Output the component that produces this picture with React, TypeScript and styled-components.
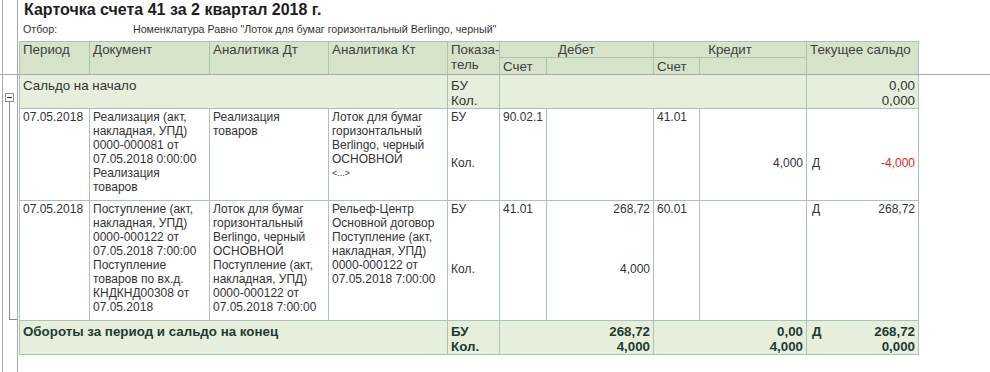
import React from 'react'
import styled, { createGlobalStyle, css } from 'styled-components'

const COLS = '70px 120px 119px 119px 52px 47px 107px 46px 107px 112px'
const GRID_LINE = '#a9c3b7'
const HEAD_BG = '#d6e3ca'
const SOFT_BG = '#e5efdc'
const SHEET_LINE = '#a8a8a8'

const GlobalStyle = createGlobalStyle`
  html, body {
    margin: 0;
    padding: 0;
    background: #fff;
  }
  body {
    font-family: 'Liberation Sans', Arial, sans-serif;
    color: #333;
  }
`

const Sheet = styled.div`
  display: flex;
  flex-direction: column;
  width: 990px;
  min-height: 372px;
  overflow: hidden;
`

const Line = styled.div<{ $rule?: boolean }>`
  display: flex;
  ${({ $rule }) =>
    $rule &&
    css`
      border-bottom: 1px solid ${SHEET_LINE};
    `}
`

const Filler = styled(Line)`
  flex: 1;
`

const Gutter = styled.div`
  flex: 0 0 16px;
  margin-left: 2px;
  box-sizing: border-box;
  border-left: 1px solid ${SHEET_LINE};
  border-right: 1px solid ${SHEET_LINE};
  display: flex;
  flex-direction: column;
`

const Toggle = styled.div`
  margin: auto 0 0 2px;
  width: 9px;
  height: 9px;
  box-sizing: border-box;
  border: 1px solid #8a8a8a;
  display: flex;
  align-items: center;
  justify-content: center;
  &::after {
    content: '';
    width: 5px;
    height: 1px;
    background: #333;
  }
`

const Stem = styled.div<{ $grow?: boolean }>`
  margin-left: 6px;
  width: 1px;
  height: 7px;
  background: #8a8a8a;
  ${({ $grow }) =>
    $grow &&
    css`
      flex: 1;
    `}
`

const Elbow = styled.div`
  flex: 1;
  margin: 0 0 1px 6px;
  border-left: 1px solid #8a8a8a;
  border-bottom: 1px solid #8a8a8a;
`

const Body = styled.div`
  flex: 1;
  padding-left: 1px;
`

const Title = styled.h1`
  margin: 0;
  padding-left: 5px;
  font-size: 16px;
  line-height: 20px;
  font-weight: bold;
  color: #1e1e1e;
`

const Filter = styled.div`
  display: flex;
  margin-top: 2px;
  padding-left: 4px;
  font-size: 10.67px;
  line-height: 15px;
  color: #333;
  white-space: nowrap;
`

const FilterLabel = styled.span`
  width: 110px;
`

const Head = styled.div`
  display: grid;
  grid-template-columns: ${COLS};
  grid-template-rows: 16px 16px;
  width: max-content;
  margin-top: 4px;
  border-top: 1px solid ${GRID_LINE};
  border-left: 1px solid ${GRID_LINE};
  background: ${HEAD_BG};
  font-size: 13.33px;
  line-height: 15px;
  color: #3f3f3f;
`

const HeadCell = styled.div<{ $col: string; $row?: string; $center?: boolean; $under?: boolean }>`
  grid-column: ${({ $col }) => $col};
  grid-row: ${({ $row }) => $row ?? '1 / 3'};
  padding: 0 3px;
  border-right: 1px solid ${GRID_LINE};
  text-align: ${({ $center }) => ($center ? 'center' : 'left')};
  white-space: nowrap;
  overflow: hidden;
  ${({ $under }) =>
    $under &&
    css`
      border-bottom: 1px solid ${GRID_LINE};
    `}
`

const SubHeadCell = styled(HeadCell)`
  padding-top: 1px;
`

const Row = styled.div<{ $soft?: boolean; $bold?: boolean }>`
  display: grid;
  grid-template-columns: ${COLS};
  width: max-content;
  border-left: 1px solid ${GRID_LINE};
  border-bottom: 1px solid ${GRID_LINE};
  background: ${({ $soft }) => ($soft ? SOFT_BG : '#fff')};
  font-weight: ${({ $bold }) => ($bold ? 'bold' : 'normal')};
  color: ${({ $bold }) => ($bold ? '#1f3b31' : '#333')};
`

const Stack = styled.div<{ $col?: string }>`
  grid-column: ${({ $col }) => $col ?? 'auto'};
  display: flex;
  flex-direction: column;
  padding: 3px 3px 0;
  border-right: 1px solid ${GRID_LINE};
  font-size: 13.33px;
  line-height: 15px;
  white-space: nowrap;
`

const TextCell = styled.div`
  padding: 1px 3px 6px;
  border-right: 1px solid ${GRID_LINE};
  font-size: 12px;
  line-height: 14px;
  white-space: nowrap;
  overflow: hidden;
`

const Small = styled.div`
  font-size: 9px;
`

const SplitCell = styled.div`
  display: grid;
  grid-template-rows: 1fr 1fr;
  border-right: 1px solid ${GRID_LINE};
  font-size: 12px;
  line-height: 14px;
  white-space: nowrap;
`

const Pair = styled.div`
  display: flex;
  justify-content: space-between;
`

const Half = styled(Pair)`
  padding: 1px 3px 0;
`

const Mark = styled.span`
  margin-left: 2px;
`

const Amount = styled.span<{ $negative?: boolean }>`
  margin-left: auto;
  color: ${({ $negative }) => ($negative ? '#e11d1d' : 'inherit')};
`

type Side = { mark?: string; value?: string; negative?: boolean }

type Entry = {
  period: string
  doc: string[]
  dt: string[]
  kt: string[]
  ktNote?: string
  debitAcc: string
  debit: [Side, Side]
  creditAcc: string
  credit: [Side, Side]
  saldo: [Side, Side]
}

const entries: Entry[] = [
  {
    period: '07.05.2018',
    doc: [
      'Реализация (акт,',
      'накладная, УПД)',
      '0000-000081 от',
      '07.05.2018 0:00:00',
      'Реализация',
      'товаров',
    ],
    dt: ['Реализация', 'товаров'],
    kt: ['Лоток для бумаг', 'горизонтальный', 'Berlingo, черный', 'ОСНОВНОЙ'],
    ktNote: '<...>',
    debitAcc: '90.02.1',
    debit: [{}, {}],
    creditAcc: '41.01',
    credit: [{}, { value: '4,000' }],
    saldo: [{}, { mark: 'Д', value: '-4,000', negative: true }],
  },
  {
    period: '07.05.2018',
    doc: [
      'Поступление (акт,',
      'накладная, УПД)',
      '0000-000122 от',
      '07.05.2018 7:00:00',
      'Поступление',
      'товаров по вх.д.',
      'КНДКНД00308 от',
      '07.05.2018',
    ],
    dt: [
      'Лоток для бумаг',
      'горизонтальный',
      'Berlingo, черный',
      'ОСНОВНОЙ',
      'Поступление (акт,',
      'накладная, УПД)',
      '0000-000122 от',
      '07.05.2018 7:00:00',
    ],
    kt: [
      'Рельеф-Центр',
      'Основной договор',
      'Поступление (акт,',
      'накладная, УПД)',
      '0000-000122 от',
      '07.05.2018 7:00:00',
    ],
    debitAcc: '41.01',
    debit: [{ value: '268,72' }, { value: '4,000' }],
    creditAcc: '60.01',
    credit: [{}, {}],
    saldo: [{ mark: 'Д', value: '268,72' }, {}],
  },
]

function Lines({ items }: { items: string[] }) {
  return (
    <>
      {items.map((t, i) => (
        <div key={i}>{t}</div>
      ))}
    </>
  )
}

function Split({ sides, labels }: { sides?: [Side, Side]; labels?: [string, string] }) {
  return (
    <SplitCell>
      {[0, 1].map((i) => {
        const side = sides?.[i]
        return (
          <Half key={i}>
            {labels && <span>{labels[i]}</span>}
            {side?.mark && <Mark>{side.mark}</Mark>}
            {side?.value && <Amount $negative={side.negative}>{side.value}</Amount>}
          </Half>
        )
      })}
    </SplitCell>
  )
}

function EntryRow({ entry }: { entry: Entry }) {
  return (
    <Row>
      <TextCell>{entry.period}</TextCell>
      <TextCell>
        <Lines items={entry.doc} />
      </TextCell>
      <TextCell>
        <Lines items={entry.dt} />
      </TextCell>
      <TextCell>
        <Lines items={entry.kt} />
        {entry.ktNote && <Small>{entry.ktNote}</Small>}
      </TextCell>
      <Split labels={['БУ', 'Кол.']} />
      <TextCell>{entry.debitAcc}</TextCell>
      <Split sides={entry.debit} />
      <TextCell>{entry.creditAcc}</TextCell>
      <Split sides={entry.credit} />
      <Split sides={entry.saldo} />
    </Row>
  )
}

export default function App() {
  return (
    <Sheet>
      <GlobalStyle />
      <Line>
        <Gutter />
        <Body>
          <Title>Карточка счета 41 за 2 квартал 2018 г.</Title>
          <Filter>
            <FilterLabel>Отбор:</FilterLabel>
            <span>Номенклатура Равно "Лоток для бумаг горизонтальный Berlingo, черный"</span>
          </Filter>
        </Body>
      </Line>
      <Line $rule>
        <Gutter />
        <Body>
          <Head>
            <HeadCell $col="1">Период</HeadCell>
            <HeadCell $col="2">Документ</HeadCell>
            <HeadCell $col="3">Аналитика Дт</HeadCell>
            <HeadCell $col="4">Аналитика Кт</HeadCell>
            <HeadCell $col="5">
              Показа-
              <br />
              тель
            </HeadCell>
            <HeadCell $col="6 / 8" $row="1" $center $under>
              Дебет
            </HeadCell>
            <HeadCell $col="8 / 10" $row="1" $center $under>
              Кредит
            </HeadCell>
            <HeadCell $col="10">Текущее сальдо</HeadCell>
            <SubHeadCell $col="6" $row="2">Счет</SubHeadCell>
            <SubHeadCell $col="7" $row="2" />
            <SubHeadCell $col="8" $row="2">Счет</SubHeadCell>
            <SubHeadCell $col="9" $row="2" />
          </Head>
        </Body>
      </Line>
      <Line>
        <Gutter>
          <Toggle />
          <Stem />
        </Gutter>
        <Body>
          <Row $soft>
            <Stack $col="1 / 5">Сальдо на начало</Stack>
            <Stack>
              <span>БУ</span>
              <span>Кол.</span>
            </Stack>
            <Stack $col="6 / 10" />
            <Stack>
              <Amount>0,00</Amount>
              <Amount>0,000</Amount>
            </Stack>
          </Row>
        </Body>
      </Line>
      {entries.map((entry, i) => (
        <Line key={i}>
          <Gutter>{i === entries.length - 1 ? <Elbow /> : <Stem $grow />}</Gutter>
          <Body>
            <EntryRow entry={entry} />
          </Body>
        </Line>
      ))}
      <Line>
        <Gutter />
        <Body>
          <Row $soft $bold>
            <Stack $col="1 / 5">Обороты за период и сальдо на конец</Stack>
            <Stack>
              <span>БУ</span>
              <span>Кол.</span>
            </Stack>
            <Stack $col="6 / 8">
              <Amount>268,72</Amount>
              <Amount>4,000</Amount>
            </Stack>
            <Stack $col="8 / 10">
              <Amount>0,00</Amount>
              <Amount>4,000</Amount>
            </Stack>
            <Stack>
              <Pair>
                <Mark>Д</Mark>
                <Amount>268,72</Amount>
              </Pair>
              <Pair>
                <Amount>0,000</Amount>
              </Pair>
            </Stack>
          </Row>
        </Body>
      </Line>
      <Filler>
        <Gutter />
      </Filler>
    </Sheet>
  )
}
